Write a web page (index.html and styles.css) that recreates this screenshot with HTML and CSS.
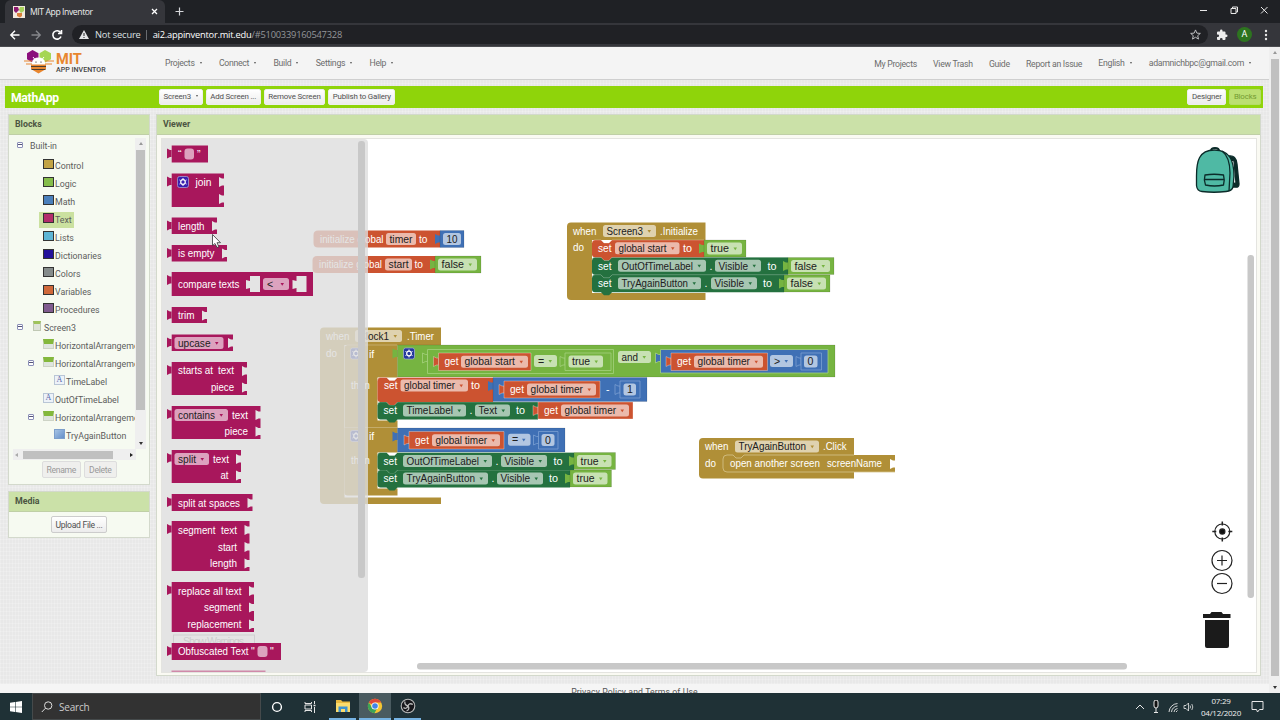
FILE: index.html
```html
<!DOCTYPE html>
<html lang="en">
<head>
    <meta charset="UTF-8">
    <title>MIT App Inventor</title>
    <link rel="stylesheet" href="styles.css">
</head>
<body>

    <!-- browser window -->
    <div class="tabstrip">
        <div class="tab">
            <svg class="favicon" width="12" height="12" viewBox="0 0 12 12"><rect width="12" height="12" fill="#f3e9dc"/><path d="M1 1h4l1 3-3 3-2-2z" fill="#8c1a70"/><path d="M7 1h4v4l-3 2-2-3z" fill="#a8d25c"/><path d="M4 7h5v3l-2 1.5L4 10z" fill="#d9803a"/></svg>
            <span class="tab-title">MIT App Inventor</span>
            <svg width="7" height="7" viewBox="0 0 7 7"><path d="M1 1l5 5M6 1L1 6" stroke="#fff" stroke-width="1.3"/></svg>
        </div>
        <svg class="newtab" width="9" height="9" viewBox="0 0 9 9"><path d="M4.5 .5v8M.5 4.5h8" stroke="#d5d7da" stroke-width="1.2"/></svg>
        <svg class="window-buttons" width="70" height="12" viewBox="0 0 70 12" fill="none" stroke="#e8e8e8"><path d="M1 6.5h7"/><path d="M32 4.5h5v5h-5zM33.5 4.5v-1.500h5v5h-1.500"/><path d="M62 3l6.500 6.500M68.500 3l-6.500 6.500"/></svg>
    </div>
    <div class="toolbar">
        <svg width="55" height="14" viewBox="0 0 55 14" fill="none" stroke-width="1.4"><path d="M10.500 7H2M6 2.800L1.800 7 6 11.200" stroke="#fff"/><path d="M22.500 7H31M27 2.800L31.200 7 27 11.200" stroke="#85878b"/><path d="M51.500 4.500A4.200 4.200 0 1 0 52 8.500M52.500 2v3.500H49" stroke="#fff" stroke-width="1.6"/></svg>
        <div class="address">
            <svg width="10" height="9" viewBox="0 0 10 9"><path d="M5 0l5 9H0z" fill="#e4e5e7"/><path d="M5 3v3M5 7v1" stroke="#222" /></svg>
            <span class="secure">Not secure</span><span class="divider"></span>
            <span class="url"><b>ai2.appinventor.mit.edu</b>/#5100339160547328</span>
            <svg class="star" width="11" height="11" viewBox="0 0 12 12"><path d="M6 1l1.500 3.500 3.800.3-2.900 2.500.9 3.700L6 9l-3.300 2 .9-3.700L.7 4.800l3.800-.3z" fill="none" stroke="#c8cacd"/></svg>
        </div>
        <svg width="12" height="12" viewBox="0 0 24 24"><path fill="#eee" d="M20.500 11H19V7a2 2 0 0 0-2-2h-4V3.500a2.500 2.500 0 0 0-5 0V5H4a2 2 0 0 0-2 2v3.800h1.500a2.700 2.700 0 0 1 0 5.400H2V20a2 2 0 0 0 2 2h3.800v-1.500a2.700 2.700 0 0 1 5.400 0V22H17a2 2 0 0 0 2-2v-4h1.500a2.500 2.500 0 0 0 0-5z"/></svg>
        <span class="avatar">A</span>
        <svg width="4" height="12" viewBox="0 0 4 12" fill="#e8e8e8"><circle cx="2" cy="2" r="1.200"/><circle cx="2" cy="6" r="1.200"/><circle cx="2" cy="10" r="1.200"/></svg>
    </div>

    <div class="window">
        <div class="page">
            <header class="topbar">
                <svg class="bee" width="30" height="26" viewBox="0 0 30 26">
                    <path d="M8.500 1l6 3.200v6L8.500 13.500 3 10.200v-6z" fill="#8b0f7c"/>
                    <path d="M21 1l6 3.200v6L21 13.500l-5.500-3.300v-6z" fill="#a5d653"/>
                    <path d="M0 12h8M21 12h9M2 15h6M21 15h7" stroke="#e8862f" stroke-width="1.100"/>
                    <path d="M11 10.500L9 8M18 10.500L20 8" stroke="#fff"/>
                    <path d="M8 16v-2.500a6.500 5 0 0 1 13 0V16z" fill="#fff"/>
                    <path d="M7 15.500h15v4.500l-7.500 4.500L7 20z" fill="#e8862f"/>
                    <path d="M7 17.500h15M7.500 20.500h14" stroke="#4c3d30" stroke-width="1.100"/>
                    <circle cx="12" cy="13" r=".6"/><circle cx="17" cy="13" r=".6"/>
                </svg>
                <div class="brand"><strong>MIT</strong><span>APP INVENTOR</span></div>
                <nav class="menu">
                    <a class="drop">Projects</a><a class="drop">Connect</a><a class="drop">Build</a><a class="drop">Settings</a><a class="drop">Help</a>
                </nav>
                <nav class="links">
                    <a>My Projects</a><a>View Trash</a><a>Guide</a><a>Report an Issue</a><a class="drop up">English</a><a class="drop up mail">adamnichbpc@gmail.com</a>
                </nav>
            </header>

            <div class="project">
                <h1>MathApp</h1>
                <button class="drop">Screen3</button>
                <button>Add Screen ...</button>
                <button>Remove Screen</button>
                <button>Publish to Gallery</button>
                <span class="grow"></span>
                <button>Designer</button>
                <button class="off">Blocks</button>
            </div>

            <div class="columns">
                <div class="side">
                    <section class="panel">
                        <h2>Blocks</h2>
                        <div class="tree-box">
                            <div class="tree" id="tree"></div>
                            <div class="vscroll"><i class="arr-up"></i><b></b><i class="arr-down"></i></div>
                            <div class="hscroll"><i class="arr-left"></i><b></b><i class="arr-right"></i></div>
                        </div>
                        <div class="panel-buttons"><button disabled>Rename</button><button disabled>Delete</button></div>
                    </section>
                    <section class="panel media">
                        <h2>Media</h2>
                        <div class="panel-buttons"><button>Upload File ...</button></div>
                    </section>
                </div>
                <section class="panel viewer">
                    <h2>Viewer</h2>
                    <div class="canvas">
                        <svg id="workspace" width="1094" height="533" viewBox="162 139 1094 533"></svg>
                        <div class="flyout"><div class="flyout-bar"></div></div>
                        <svg id="flyout-blocks" width="210" height="533" viewBox="162 139 210 533"></svg>
                    </div>
                </section>
            </div>
            <footer>Privacy Policy and Terms of Use</footer>
        </div>
        <div class="page-scroll"><i class="arr-up"></i><b></b><i class="arr-down"></i></div>
    </div>

    <div class="taskbar">
        <svg class="win" width="12" height="12" viewBox="0 0 12 12" fill="#fff"><path d="M0 1.700l5-.7v4.700H0zM5.600.9L12 0v5.700H5.600zM0 6.300h5V11l-5-.7zM5.600 6.300H12V12l-6.400-.9z"/></svg>
        <div class="search">
            <svg width="12" height="12" viewBox="0 0 12 12" fill="none" stroke="#ddd"><circle cx="7.200" cy="4.500" r="3.700"/><path d="M4.500 7.200L.8 11"/></svg>
            Search
        </div>
        <span class="app"><svg width="12" height="12" viewBox="0 0 12 12"><circle cx="6" cy="6" r="4.400" fill="none" stroke="#fff" stroke-width="1.400"/></svg></span>
        <span class="app"><svg width="12" height="12" viewBox="0 0 12 12" fill="none" stroke="#e5e5e5"><path d="M1 1v1.500h6.500V1M1 11V9.500h6.500V11M1 4h6.500v4H1zM10.500 0v3M10.500 6v6"/><path d="M9.500 4.500h2" stroke-width="1.500"/></svg></span>
        <span class="app open"><svg width="16" height="14" viewBox="0 0 16 14"><path d="M1 1h5l1.500 1.500H15V13H1z" fill="#e9b93f"/><path d="M1 4h14v9H1z" fill="#fbdc6d"/><path d="M3.500 13V7.500h9V13h-2.500v-3H6v3z" fill="#3f93d0"/></svg></span>
        <span class="app open current"><svg width="16" height="16" viewBox="0 0 16 16"><circle cx="8" cy="8" r="7.200" fill="#f5c633"/><path d="M8 8L1.800 4.400A7.200 7.200 0 0 1 14.300 4.500H8z" fill="#de4a3b"/><path d="M1.800 4.400A7.200 7.200 0 0 0 7.500 15.200L10.500 9.500 8 8 5 9.500z" fill="#3ba457"/><circle cx="8" cy="8" r="3.600" fill="#fff"/><circle cx="8" cy="8" r="2.800" fill="#4285e8"/></svg></span>
        <span class="app open obs"><svg width="16" height="16" viewBox="0 0 16 16"><circle cx="8" cy="8" r="6.800" fill="#17171b" stroke="#bbb" stroke-width="1.100"/><path d="M5 3.500c-.8 2.500 1 4 3 4.500M12.800 6.500C10.500 5 8.500 6 8 8M6.500 13c2.500-.8 3-3 1.500-5M3.500 9.500c1.500 1.500 3.500 1 4.500-1.500" fill="none" stroke="#bbb" stroke-width="1.300"/></svg></span>
        <span class="grow"></span>
        <svg class="tray" width="60" height="14" viewBox="0 0 60 14" fill="none" stroke="#e8e8e8"><path d="M1 9l4-4 4 4"/><path d="M19 2a2 2 0 0 1 4 0v4a2 2 0 0 1-4 0zM21 8v4M19 12.500h4" fill="#111"/><path d="M34 12a9 9 0 0 1 8.500-8.500M36.500 12A6.500 6.500 0 0 1 42.500 6M39 12a4 4 0 0 1 3.500-3.500M41 12l1.500-1.500" stroke-width=".9"/><path d="M49 5.500h2l2.500-2.500v8L51 8.500h-2zM55 5.500q1 1.500 0 3M56.800 4q2 3 0 6" stroke-width=".8"/></svg>
        <div class="clock"><span>07:29</span><span>04/12/2020</span></div>
        <svg class="note" width="13" height="13" viewBox="0 0 13 13"><path d="M1 1.500h11v8H8.500L6.500 12 5.500 9.500H1z" fill="none" stroke="#e8e8e8"/></svg>
    </div>

    <script src="blocks.js"></script>
</body>
</html>
```
FILE: styles.css
```css
* { box-sizing: border-box; }

body {
    margin: 0;
    width: 1280px;
    height: 720px;
    overflow: hidden;
    font-family: Roboto, "Liberation Sans", sans-serif;
    font-size: 9px;
    color: #5c5c5c;
    background: #ececec;
}
svg { display: block; flex: none; }
.grow { flex: 1; }

/* browser chrome */
.tabstrip {
    height: 23px;
    background: #1f2125;
    display: flex;
    align-items: center;
}
.tab {
    width: 160px;
    height: 23px;
    margin-left: 5px;
    padding: 0 7px 0 8px;
    background: #35363b;
    border-radius: 6px 6px 0 0;
    display: flex;
    align-items: center;
    color: #f1f1f1;
}
.tab-title {
    flex: 1;
    margin-left: 5px;
    font: 8.6px "Open Sans", sans-serif;
    letter-spacing: -.4px;
}
.newtab { margin-left: 10px; }
.window-buttons { margin: -4px 11px 0 auto; }
.toolbar {
    height: 24px;
    background: #35363b;
    border-bottom: 1px solid #4b4c50;
    display: flex;
    align-items: center;
    padding: 0 12px 0 9px;
}
.address {
    width: 1136px;
    height: 19px;
    margin: 0 8px 0 8px;
    padding: 0 7px;
    border-radius: 10px;
    background: #202125;
    display: flex;
    align-items: center;
    font: 9.3px "Open Sans", sans-serif;
    color: #dfe0e2;
}
.secure { margin-left: 6px; letter-spacing: -.15px; }
.divider { width: 1px; height: 10px; margin: 0 6px 0 5px; background: #696b6f; }
.url { color: #94969a; letter-spacing: -.22px; }
.url b { color: #fff; font-weight: normal; }
.star { margin-left: auto; }
.avatar {
    width: 15px;
    height: 15px;
    margin: 0 12px 0 9px;
    border-radius: 50%;
    background: #2d741f;
    color: #fff;
    text-align: center;
    font-size: 9px;
    line-height: 15px;
}

/* page */
.window { display: flex; height: 646px; }
.page {
    width: 1269px;
    overflow: hidden;
    background-color: #e8e8e8;
    background-image: repeating-linear-gradient(90deg, #ffffff30 0 1px, transparent 1px 3px), repeating-linear-gradient(#ffffff30 0 1px, transparent 1px 4px);
}
.topbar {
    height: 33px;
    background: #f4f4f4;
    border-bottom: 1px solid #cfcfcf;
    display: flex;
    align-items: center;
    font-size: 8.7px;
    letter-spacing: -.28px;
    color: #6c6c6c;
}
.bee { margin: -2px 0 0 24px; }
.brand { margin-left: 2px; width: 50px; letter-spacing: 0; }
.brand strong { display: block; font-size: 14.6px; line-height: 12px; color: #e8862f; }
.brand span { display: block; font-size: 7.1px; line-height: 9px; color: #444; font-weight: 500; white-space: nowrap; }
.menu { display: flex; margin-left: 59px; gap: 17.3px; }
.links { display: flex; margin-left: auto; gap: 16.2px; margin-right: 18px; }
.links a { padding-top: 1px; }
.links .up { padding-top: 0; }
.links .mail { margin-left: 1px; }
.drop::after {
    content: "";
    display: inline-block;
    margin-left: 5px;
    vertical-align: 2px;
    border: 1.500px solid transparent;
    border-top: 2px solid #555;
    border-bottom: 0;
}
.project {
    height: 22px;
    margin: 6px 6px 0 5px;
    padding: 0 2px 0 6px;
    background: #8fd40a;
    display: flex;
    align-items: center;
    gap: 3px;
}
.project h1 { margin: 3px 0 0; width: 145px; font-size: 12.2px; color: #fff; line-height: 1; letter-spacing: -.3px; }
button {
    font: 8.6px Roboto, sans-serif;
    letter-spacing: -.3px;
    color: #505050;
    border: 1px solid #ccc;
    border-radius: 2px;
    background: linear-gradient(#fff, #ececec);
    padding: 0 4px;
    height: 17px;
    white-space: nowrap;
}
.project button { height: 16px; border-color: #eee; font-size: 7.9px; padding: 0 3.600px 1px; letter-spacing: -.17px; }
.project .off { background: #bbdf72; border-color: #b4db69; color: #749b32; }
button:disabled { background: #efefed; color: #999; border-color: #ddd; }

.columns { display: flex; gap: 6px; padding: 6px 8px 0 8px; height: 568px; }
.side { width: 142px; }
.panel {
    background: #f6faf1;
    border: 1px solid #d3d9cc;
    height: 371px;
}
.panel h2 {
    margin: 0;
    height: 20px;
    padding-left: 6px;
    background: #cbe1a8;
    border-bottom: 1px solid #bfcfa6;
    font-size: 8.8px;
    line-height: 19px;
    color: #4b5542;
}
.tree-box {
    display: grid;
    grid-template-columns: 122px 11px;
    grid-template-rows: 311px 11px;
    margin: 3px 4px 0;
}
.tree { overflow: hidden; font-size: 8.8px; }
.tree div { height: 18px; display: flex; align-items: center; white-space: nowrap; }
.tree div:first-child { height: 19px; padding-bottom: 3px; }
.tree .toggle { width: 6px; height: 6px; border: 1px solid #8c8fb8; border-radius: 1px; background: linear-gradient(#557, #557) center / 4px 1px no-repeat #fff; flex: none; margin-top: -3px; }
.tree .space { flex: none; }
.tree .icon { width: 11px; height: 10px; margin: -5px 1px 0 0; flex: none; }
.tree .swatch { border: 1px solid #333; border-right-width: 1.500px; }
.tree .label-icon { border: 1px solid #b9c6d6; background: #edf2f8; color: #5765a8; font: 8px/8px "Liberation Serif", serif; text-align: center; }
.tree .button-icon { background: linear-gradient(135deg, #a7c4e4, #648fca); border: 1px solid #7d9fcb; }
.tree .screen-icon { width: 8px; background: #dfe3da; border: 1px solid #c0c8b4; border-top: 3px solid #9fc35c; margin-right: 3px; }
.tree .arr-icon { border: 1px solid #cdd3c6; border-top: 5px solid #83b83c; background: #dfe5df; }
.tree .selected span { background: #cbe1a0; padding: 3px 2px 3px 16px; margin-left: -16px; }
.tree .selected .icon { position: relative; z-index: 1; }

.vscroll, .page-scroll { display: flex; flex-direction: column; align-items: center; background: #efefef; }
.vscroll { width: 11px; padding: 4px 0; }
.vscroll b { width: 9px; height: 260px; margin: 5px 0 auto; background: #c0c0c0; }
.hscroll { grid-column: 1 / 3; display: flex; align-items: center; background: #efefef; padding: 0 3px 0 2px; width: 123px; }
.hscroll b { width: 90px; height: 8px; margin: 0 auto 0 5px; background: #c0c0c0; }
.page-scroll { width: 11px; padding: 4px 0; }
.page-scroll b { width: 8px; height: 617px; margin: 5px 0 auto; background: #c0c0c0; }
.arr-up, .arr-down, .arr-left, .arr-right { border: 2.500px solid transparent; }
.arr-up { border-top: 0; border-bottom: 3px solid #999; }
.arr-down { border-bottom: 0; border-top: 3px solid #333; }
.arr-left { border-left: 0; border-right: 3px solid #aaa; }
.arr-right { border-right: 0; border-left: 3px solid #222; }

.panel-buttons { display: flex; justify-content: center; gap: 3px; padding-top: 1px; }
.media { height: 47px; margin-top: 6px; }
.media .panel-buttons { padding-top: 4px; }

.viewer { width: 1105px; height: 562px; background: #fafaf3; }
.canvas {
    position: relative;
    width: 1096px;
    height: 535px;
    margin: 3px 0 0 4px;
    border: 1px solid #e4e4e0;
    background: #fff;
}
.flyout {
    position: absolute;
    left: 0;
    top: 0;
    width: 206px;
    height: 533px;
    border-radius: 0 4px 4px 0;
    background: rgba(221, 221, 221, .8);
}
.flyout-bar { width: 7px; height: 437px; margin: 2px 3px 0 auto; border-radius: 3px; background: #c8c8c8; }
#flyout-blocks { position: absolute; left: 0; top: 0; }
footer { height: 16px; margin-top: 8px; background: #f5f5f5; text-align: center; font-size: 8.7px; line-height: 16px; letter-spacing: .1px; color: #555; }

/* blockly text */
.canvas text { font-family: "Liberation Sans", Arial, sans-serif; font-size: 10.6px; fill: #fff; }
.canvas text.dark { fill: #202020; }
.canvas .field { fill: #fff; fill-opacity: .6; }
.canvas .scroll { fill: #c8c8c8; }

/* taskbar */
.taskbar {
    height: 27px;
    background: #1f3136;
    display: flex;
    align-items: center;
    color: #f0f0f0;
}
.win { margin: 0 10px; }
.search {
    width: 229px;
    height: 27px;
    padding-left: 8px;
    background: #323232;
    border: 1px solid #454a4b;
    display: flex;
    align-items: center;
    gap: 6px;
    font: 10px "Open Sans", sans-serif;
    letter-spacing: -.2px;
    color: #ccc;
}
.app { width: 32.500px; height: 27px; display: flex; align-items: center; justify-content: center; }
.open { border-bottom: 2px solid #76b3e3; width: 27px; margin: 0 3px; }
.current { background: #4a5b60; width: 32px; margin: 0; }
.tray { margin-right: 4px; }
.clock { width: 44px; text-align: center; font: 8px/12px "Open Sans", sans-serif; letter-spacing: -.25px; }
.clock span { display: block; }
.note { margin: 0 16px 0 8px; }
```
FILE: blocks.js
```js
// colours by block category
const C = { text: '#a8175c', ctrl: '#b08f37', logic: '#76b441', math: '#3f70b5', vars: '#cc5330', set: '#24713f' };

// --- TREE ---
const tree = [
    [4, 'toggle', 'Built-in', 7],
    [30, '#c2a345', 'Control'], [30, '#85bd4b', 'Logic'], [30, '#4a7fbb', 'Math'], [30, '#b32d6b', 'Text'],
    [30, '#5db5d5', 'Lists'], [30, '#23109b', 'Dictionaries'], [30, '#858b8b', 'Colors'], [30, '#d0683a', 'Variables'], [30, '#805b8f', 'Procedures'],
    [4, 'toggle', 'Screen3', 10, 'screen-icon'],
    [30, 'arr-icon', 'HorizontalArrangement1'],
    [15, 'toggle', 'HorizontalArrangement2', 9, 'arr-icon'],
    [41, 'label-icon', 'TimeLabel'], [30, 'label-icon', 'OutOfTimeLabel'],
    [15, 'toggle', 'HorizontalArrangement3', 9, 'arr-icon'],
    [41, 'button-icon', 'TryAgainButton'], [30, '', 'Clock1']
];
const treeEl = document.getElementById('tree');
tree.forEach(([pad, kind, label, gap, icon]) => {
    let html = '';
    if (kind === 'toggle') {
        html = `<i class="toggle"></i><i class="space" style="width:${gap}px"></i>` + (icon ? `<i class="icon ${icon}"></i>` : '');
    } else if (kind[0] === '#') {
        html = `<i class="icon swatch" style="background:${kind}"></i>`;
    } else {
        html = `<i class="icon ${kind}">${kind === 'label-icon' ? 'A' : ''}</i>`;
    }
    treeEl.innerHTML += `<div class="${label === 'Text' ? 'selected' : ''}" style="padding-left:${pad}px">${html}<span>${label}</span></div>`;
});

// --- DRAWING HELPERS ---
const t = (x, y, s, w, cls = '') => `<text x="${x}" y="${y}" class="${cls}" ${w ? `textLength="${w}" lengthAdjust="spacingAndGlyphs"` : ''}>${s}</text>`;

// editable field or dropdown, from x to x2, centred on y
function field(x, x2, y, label, color) {
    const w = x2 - x, tw = color ? w - 16.5 : w - 7;
    const symbol = label.length === 1 || label[0] === '&';
    const arrow = color ? `<path d="M${x2 - 8.5} ${y - 1}h3.500l-1.750 2.700z" fill="${color}"/>` : '';
    return `<rect class="field" x="${x}" y="${y - 6}" width="${w}" height="12" rx="2.500"/>` + t(x + (symbol && color ? 4 : 3.5), y + 3.7, label, symbol ? 0 : tw, 'dark') + arrow;
}
const tab = (x, y) => `M${x} ${y + 4.5}h-2l-3-1.500v10l3-1.500h2z`;
// value block with its output tab
function val(x, y, x2, y2, color, line) {
    const d = `M${x} ${y}H${x2}V${y2}H${x}z`;
    const top = y + .5;
    return `<path d="${tab(x, top)}" fill="${color}" ${line ? `stroke="${line}" stroke-width=".8"` : ''}/><path d="${d}" fill="${color}" stroke="${line || '#00000022'}" stroke-width=".8"/>`;
}
// statement block with the notch under it
const stmt = (x, y, x2, y2, color) =>
    `<path d="M${x + 3} ${y}h6l3 3h5l3-3H${x2}V${y2}H${x + 20}l-3 3h-5l-3-3H${x + 3}q-3 0-3-3V${y + 3}q0-3 3-3z" fill="${color}"/>` +
    `<path d="M${x} ${y + 3}q0-3 3-3h6l3 3h5l3-3H${x2}" fill="none" stroke="#ffffff55" stroke-width=".8"/>`;
const socket = (x, y, fill) => `<path d="M${x + .5} ${y - 3.5}h-2.500l-3-1.500v10l3-1.500h2.500z" fill="${fill}"/>`;
const gear = (x, y) => `<rect x="${x}" y="${y}" width="11" height="11" rx="2" fill="#23379d" stroke="#a9b0dd" stroke-width=".7"/><circle cx="${x + 5.5}" cy="${y + 5.5}" r="2.300" fill="none" stroke="#fff" stroke-width="1.200"/><path d="M${x + 5.5} ${y + 1.5}v1.500m0 5v1.500M${x + 2} ${y + 3.5}l1 .6m5 2.800l1 .6M${x + 2} ${y + 7.5}l1-.6m5-2.800l1-.6" stroke="#fff"/>`;
const get = (x, y, x2, y2, fx, fx2, name) => val(x, y, x2, y2, C.vars, '#ffffff66') + t(x + 6, (y + y2) / 2 + 3.7, 'get', 14) + field(fx, fx2, (y + y2) / 2, name, '#cc5330');
const bool = (x, y, x2, y2, label) => val(x, y, x2, y2, C.logic) + field(x + 3, x2 - 4, (y + y2) / 2, label, '#76b441');
// set Component.Property to
const setProp = (x, y, x2, f, fx2, p, px2, prop, to) => stmt(x, y, x2, y + 17.5, C.set) + t(x + 6, y + 12.3, 'set', 13.5) + field(f, fx2, y + 8.5, p, '#24713f') +
    t(fx2 + 3.5, y + 12.3, '.') + field(px2 - 46 + (prop === 'Text' ? 11 : 0), px2, y + 8.5, prop, '#24713f') + t(to, y + 12.3, 'to', 9);

// --- WORKSPACE ---
let w = '';
// globals
w += `<path d="M318 230.500H440V247.500H318q-4.500 0-4.500-4.500v-8q0-4.500 4.500-4.500z" fill="${C.vars}"/>` + t(320, 242.5, 'initialize global', 63.5) + field(386, 416, 239, 'timer') + t(419, 242.5, 'to', 8.5);
w += val(440, 230.5, 464, 247.5, C.math) + field(443, 461, 239, '10');
w += `<path d="M317 256H435V273H317q-4.500 0-4.500-4.500v-8q0-4.500 4.500-4.500z" fill="${C.vars}"/>` + t(319, 268, 'initialize global', 63) + field(385, 412, 264.5, 'start') + t(414.5, 268, 'to', 8.5);
w += bool(435, 256, 481, 273, 'false');

// when Screen3.Initialize
w += `<path d="M571 222.500H705.500V240H592V293H705.500V300H571q-4 0-4-4V226.500q0-4 4-4z" fill="${C.ctrl}"/>`;
w += t(573, 234.5, 'when', 23.5) + field(603, 656, 231, 'Screen3', C.ctrl) + t(660, 234.5, '.Initialize', 38) + t(573, 251, 'do', 11);
w += setProp(592, 274.7, 784, 618, 701, 'TryAgainButton', 757, 'Visible', 763) + bool(784, 275, 830, 292, 'false');
w += setProp(592, 257.3, 788, 618, 706, 'OutOfTimeLabel', 761, 'Visible', 767.5) + bool(788, 257.5, 834, 274.5, 'false');
w += stmt(592, 240, 704, 257.3, C.vars) + t(598, 252, 'set', 13.5) + field(615, 679.5, 248.3, 'global start', C.vars) + t(683, 252, 'to', 9) + bool(704, 240, 746, 257, 'true');

// when Clock1.Timer
w += `<path d="M324 327.500H441V345H344.500V497.500H441V504H324q-4 0-4-4V331.500q0-4 4-4z" fill="${C.ctrl}"/>`;
w += t(326, 340, 'when', 23.5) + field(355, 402, 336, 'Clock1', C.ctrl) + t(407, 340, '.Timer', 27) + t(326, 356.5, 'do', 11);
w += `<path d="M347.500 345H397.500V377.500H377.500V420.500H397.500V452.500H377.500V488.500H397.500V495.500H347.500q-3 0-3-3V348q0-3 3-3z" fill="${C.ctrl}"/>`;
w += `<path d="M344.500 427.500V348q0-3 3-3H397M344.500 427.500H397" fill="none" stroke="#ffffff55" stroke-width=".8"/>`;
w += gear(350.5, 348) + t(369, 357.5, 'if') + t(351, 388.5, 'then', 19) + gear(350.5, 430.5) + t(369, 440, 'if') + t(351, 464, 'then', 19);
// condition: start = true and timer > 0
w += val(397.5, 345, 835, 377, C.logic) + gear(403.5, 348);
w += val(427.5, 349.5, 613.5, 373.5, C.logic, '#a5d07e') + get(438.5, 353, 531, 370.5, 461, 528, 'global start') + field(534, 557, 361, '=', '#76b441');
w += val(565, 353, 611, 370.5, C.logic, '#a5d07e') + field(568.5, 603, 361.5, 'true', '#76b441') + field(618, 651, 357, 'and', '#76b441');
w += val(660.5, 349.5, 828, 373, C.math, '#a5d07e') + get(671, 353, 767.5, 370.5, 694, 763, 'global timer') + field(770, 793, 361, '&gt;', C.math);
w += val(801, 353, 821.5, 370, C.math, '#7ba0d2') + field(804, 817.5, 361.5, '0');
// then
w += setProp(377.5, 402, 538, 403, 466, 'TimeLabel', 510, 'Text', 516) + get(538, 402, 633, 419, 561, 629, 'global timer');
w += stmt(377.5, 377.5, 493, 402, C.vars) + t(384, 389, 'set', 13.5) + field(400.5, 468, 385.5, 'global timer', C.vars) + t(471, 389, 'to', 9);
w += val(493, 377.5, 647, 401.5, C.math) + get(504, 381, 600, 398, 527, 596, 'global timer') + t(606, 393, '-') + val(620, 381, 640, 398, C.math, '#7ba0d2') + field(623.5, 636, 389.5, '1');
// second if
w += val(397.5, 428, 565, 452, C.math) + get(409, 431.5, 504, 449, 432, 500, 'global timer') + field(508, 530.5, 439.7, '=', C.math);
w += val(538.5, 431.5, 558, 449, C.math, '#7ba0d2') + field(541.5, 554.5, 440, '0');
w += setProp(377.5, 470, 570, 403, 488, 'TryAgainButton', 543, 'Visible', 549) + bool(570, 470, 611.5, 487, 'true');
w += setProp(377.5, 452.5, 574, 403, 492, 'OutOfTimeLabel', 547, 'Visible', 553.5) + bool(574, 452.5, 615.5, 469.5, 'true');

// when TryAgainButton.Click
w += `<path d="M703 438H854V455H895V472H854V478.500H703q-4 0-4-4V442q0-4 4-4z" fill="${C.ctrl}"/><path d="M854 455H744l-3 3h-5l-3-3h-6q-4 0-4 4v9q0 4 4 4H895" fill="none" stroke="#d6c48d" stroke-width=".8"/>`;
w += t(705, 450, 'when', 23.5) + field(735, 819, 446.5, 'TryAgainButton', C.ctrl) + t(823, 450, '.Click', 23.5) + t(705, 467, 'do', 11) + t(730, 467, 'open another screen', 90) + t(827, 467, 'screenName', 55) + socket(895, 464, '#fff');

// warnings button, hidden by the flyout
w += `<rect x="173.500" y="635" width="81" height="16" fill="none" stroke="#999"/><text x="183" y="645" textLength="61" style="fill:#888">Show Warnings</text>`;

// backpack
w += `<g stroke="#0b2b29" stroke-width="1.300" fill="#4fb9a4"><path d="M1229 156q7-1 8 8l2 20q0 4-4 3h-5" fill="#0b2b29"/><path d="M1231 160l3 1 2 22-4 1z" fill="#fff"/><path d="M1211 151q0-3 4-3t4 3" fill="none" stroke-width="2"/><path d="M1196.500 176c0-14 2-26 18-26 16 0 19.500 12 19.500 26l-1 11q-1 4-7 4.500-12 1.500-24 0-5-.5-5.500-6z"/><path d="M1222 151q8 6 8 22l-1 18" fill="none"/><path d="M1205 175q9-1.500 18.500 0 1.500 5 0 10-9 2-18 0-2-5-.5-10zM1204 179.500h20" /></g>`;
// centre and zoom
w += `<g fill="none" stroke="#222" stroke-width="1.200"><circle cx="1222.300" cy="531.500" r="7.500"/><circle cx="1222.300" cy="531.500" r="2.600" fill="#111"/><path d="M1222.300 521.500v4m0 12v4M1212.300 531.500h4m12 0h4" stroke-width="1.500"/><circle cx="1222" cy="560.500" r="10"/><path d="M1217 560.500h10M1222 555.500v10"/><circle cx="1222" cy="583.500" r="10"/><path d="M1217 583.500h10"/></g>`;
// trash
w += `<path d="M1203 614h7l1.500-2h10l1.500 2h7.500v4H1203zM1205 620h24v26q0 2-2 2h-20q-2 0-2-2z" fill="#1b1b1b"/>`;
w += `<rect class="scroll" x="1247.500" y="255" width="6.500" height="343" rx="3"/><rect class="scroll" x="417" y="663" width="710" height="6.500" rx="3"/>`;
document.getElementById('workspace').innerHTML = w;

// --- FLYOUT ---
const BG = '#e4e4e4';
// [top, bottom, right, [socket rows]]
const list = [
    [145.5, 162.5, 208, []], [173.5, 207, 224, [182, 199]], [217.5, 234, 217, [226]], [245, 261.5, 227, [253.5]],
    [272, 296, 313, []], [307, 323, 207, [315.5]], [334.5, 351, 233, [343]], [362, 395, 247, [371, 387.5]],
    [406, 439, 260.5, [415, 431.5]], [450, 483, 241, [459, 475.5]], [494, 511, 252.5, [503]],
    [521, 571, 249.5, [530, 547, 563.5]], [582, 632, 254, [591, 607.5, 624.5]], [643, 660, 281, []]
];
let f = '';
list.forEach(([y, y2, x2, rows]) => {
    f += `<path d="${tab(172, y)}M171.700 ${y}H${x2}V${y2}H171.700z" fill="${C.text}"/>`;
    rows.forEach(r => f += socket(x2, r, BG));
});
f += `<rect x="171.500" y="670.500" width="94" height="1.500" fill="#d08aa9"/>`;
f += t(178, 158, '“') + `<rect class="field" x="184.500" y="148.500" width="9.500" height="11" rx="3"/>` + t(197, 158, '”');
f += gear(177.5, 176.5).replace('#23379d', '#3a1fb0') + t(195.5, 185.7, 'join', 16);
f += t(178, 229.7, 'length', 26.5) + t(178, 257, 'is empty', 36.5);
f += t(178, 287.7, 'compare texts', 61.5);
f += `<path d="M250 276h10v16h-10v-4l-4 1v-9l4 1zM296.500 276h10v16h-10v-4l-4 1v-9l4 1z" fill="${BG}"/>` + field(263, 289, 284, '&lt;', C.text);
f += t(178, 319, 'trim', 16.5) + field(174.5, 223.5, 343, 'upcase', C.text);
f += t(178, 374, 'starts at', 35) + t(218, 374, 'text', 16) + t(211, 391, 'piece', 23);
f += field(174.5, 228, 415, 'contains', C.text) + t(232, 418.5, 'text', 16) + t(224.5, 435, 'piece', 23.5);
f += field(174.5, 209, 459, 'split', C.text) + t(213, 462.5, 'text', 16) + t(220.5, 479, 'at', 8);
f += t(178, 506.5, 'split at spaces', 62);
f += t(178, 534, 'segment', 37.5) + t(221, 534, 'text', 16) + t(218, 550.5, 'start', 19) + t(210, 567, 'length', 27);
f += t(178, 594.5, 'replace all text', 63.5) + t(204, 611, 'segment', 37.5) + t(187.5, 628, 'replacement', 54);
f += t(178, 655, 'Obfuscated Text', 70.5) + t(251, 655, '"') + `<rect class="field" x="257.500" y="646" width="10" height="11" rx="3"/>` + t(270, 655, '"');
// mouse pointer
f += `<path d="M212.500 234.500v11l2.500-2 2 4 1.800-.8-1.800-4h3.500z" fill="#fff" stroke="#333" stroke-width=".8"/>`;
document.getElementById('flyout-blocks').innerHTML = f;
```
